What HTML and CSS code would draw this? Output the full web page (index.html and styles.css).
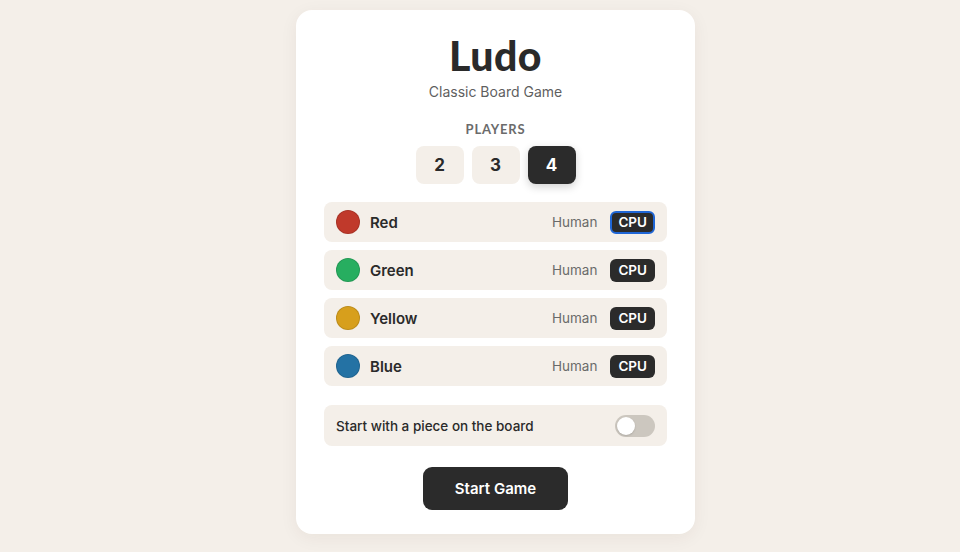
FILE: index.html
```html
<!DOCTYPE html>
<html lang="en">
<head>
<meta charset="utf-8">
<title>Ludo</title>
<link rel="stylesheet" href="styles.css">
</head>
<body>
<main class="card">
  <h1 class="title">Ludo</h1>
  <p class="subtitle">Classic Board Game</p>
  <div class="section-label">PLAYERS</div>
  <div class="count-group">
    <button class="count">2</button>
    <button class="count">3</button>
    <button class="count active">4</button>
  </div>
  <div class="players">
    <div class="player">
      <span class="dot red"></span>
      <span class="name">Red</span>
      <div class="mode">
        <button class="mode-btn">Human</button>
        <button class="mode-btn on focus">CPU</button>
      </div>
    </div>
    <div class="player">
      <span class="dot green"></span>
      <span class="name">Green</span>
      <div class="mode">
        <button class="mode-btn">Human</button>
        <button class="mode-btn on">CPU</button>
      </div>
    </div>
    <div class="player">
      <span class="dot yellow"></span>
      <span class="name">Yellow</span>
      <div class="mode">
        <button class="mode-btn">Human</button>
        <button class="mode-btn on">CPU</button>
      </div>
    </div>
    <div class="player">
      <span class="dot blue"></span>
      <span class="name">Blue</span>
      <div class="mode">
        <button class="mode-btn">Human</button>
        <button class="mode-btn on">CPU</button>
      </div>
    </div>
  </div>
  <div class="option">
    <span class="option-text">Start with a piece on the board</span>
    <span class="toggle"><span class="knob"></span></span>
  </div>
  <button class="start">Start Game</button>
</main>
</body>
</html>
```

FILE: styles.css
```css
* { box-sizing: border-box; }
html, body { margin: 0; padding: 0; }
body {
  background: #f4efe9;
  font-family: "Inter", "Liberation Sans", sans-serif;
  color: #2a2a2a;
  height: 552px;
  overflow: hidden;
  padding: 10px 0 0 31px;
}
.card {
  width: 399px;
  margin: 0 auto;
  background: #ffffff;
  border-radius: 16px;
  box-shadow: 0 4px 18px rgba(60, 40, 20, 0.06);
  padding: 24px 28px 24px;
  display: flex;
  flex-direction: column;
  align-items: center;
}
.title {
  font-family: "Lato", "Inter", sans-serif;
  font-weight: 900;
  font-size: 41px;
  line-height: 44px;
  margin: 0;
  letter-spacing: 0.5px;
  color: #2a2a2a;
}
.subtitle {
  margin: 4px 0 0;
  font-size: 14px;
  line-height: 20px;
  color: #5f5f5f;
}
.section-label {
  margin-top: 19px;
  font-family: "Lato", "Inter", sans-serif;
  font-weight: 700;
  font-size: 13px;
  letter-spacing: 0.8px;
  color: #6b6b6b;
  line-height: 16px;
}
.count-group {
  display: flex;
  gap: 8px;
  margin-top: 9px;
}
.count {
  width: 48px;
  height: 38px;
  border: none;
  border-radius: 8px;
  background: #f4efe9;
  font-family: "Inter", sans-serif;
  font-weight: 700;
  font-size: 17px;
  color: #2a2a2a;
  padding: 0;
}
.count.active {
  background: #2b2b2b;
  color: #ffffff;
  box-shadow: 0 3px 8px rgba(0, 0, 0, 0.18);
}
.players {
  align-self: stretch;
  display: flex;
  flex-direction: column;
  gap: 8px;
  margin-top: 18px;
}
.player {
  display: flex;
  align-items: center;
  height: 40px;
  padding: 0 12px;
  background: #f4efe9;
  border-radius: 8px;
}
.dot {
  width: 24px;
  height: 24px;
  border-radius: 50%;
  border: 1.5px solid rgba(0, 0, 0, 0.12);
  flex: none;
}
.dot.red { background: #c0392b; }
.dot.green { background: #27ae60; }
.dot.yellow { background: #d79f1c; }
.dot.blue { background: #2472a4; }
.name {
  margin-left: 10px;
  font-weight: 600;
  font-size: 15px;
  color: #2a2a2a;
}
.mode {
  margin-left: auto;
  display: flex;
  align-items: center;
  gap: 5px;
}
.mode-btn {
  border: 2px solid transparent;
  background: transparent;
  font-family: "Inter", sans-serif;
  font-size: 13.5px;
  line-height: 17px;
  padding: 1px 6px;
  border-radius: 6px;
  color: #6a6a6a;
}
.mode-btn.on {
  background: #2b2b2b;
  color: #ffffff;
  font-weight: 600;
}
.mode-btn.focus {
  border-color: #1f66d6;
}
.option {
  align-self: stretch;
  margin-top: 19px;
  height: 41px;
  padding: 0 12px;
  background: #f4efe9;
  border-radius: 8px;
  display: flex;
  align-items: center;
  justify-content: space-between;
}
.option-text {
  font-size: 13.5px;
  font-weight: 500;
  color: #2a2a2a;
}
.toggle {
  width: 40px;
  height: 22px;
  border-radius: 11px;
  background: #ccc7bf;
  padding: 2px;
  display: flex;
}
.knob {
  width: 18px;
  height: 18px;
  border-radius: 50%;
  background: #ffffff;
  box-shadow: 0 1px 2px rgba(0, 0, 0, 0.15);
}
.start {
  margin-top: 21px;
  width: 145px;
  height: 43px;
  border: none;
  border-radius: 9px;
  background: #2b2b2b;
  color: #ffffff;
  font-family: "Inter", sans-serif;
  font-weight: 600;
  font-size: 15px;
}
```
